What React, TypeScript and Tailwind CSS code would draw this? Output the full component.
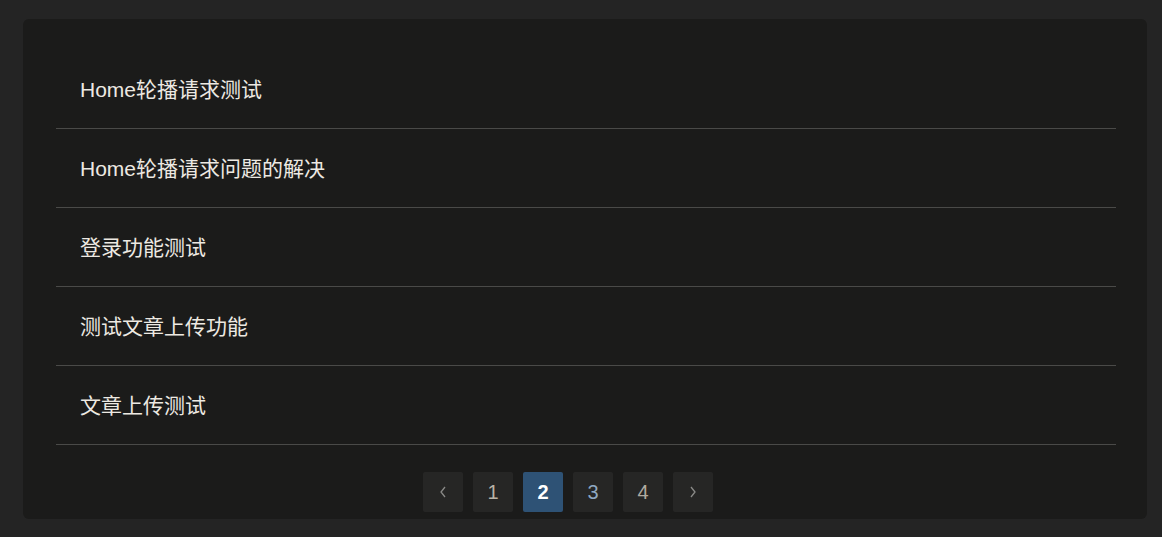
import React from "react";

const items = [
  "Home轮播请求测试",
  "Home轮播请求问题的解决",
  "登录功能测试",
  "测试文章上传功能",
  "文章上传测试",
];

export default function App() {
  const font = {
    fontFamily: '"Liberation Sans", Arial, "Noto Sans CJK SC", sans-serif',
  };
  return (
    <div className="min-h-[537px] w-full bg-[#242424] pt-[19px] pb-[19px]" style={font}>
      <div className="ml-[23px] w-[1124px] rounded-[6px] bg-[#1b1b1a] pl-[33px] pr-[31px] pt-[31px] pb-[6px]">
        <ul>
          {items.map((t) => (
            <li
              key={t}
              className="flex h-[79px] items-center border-b border-[#4a4a48] pl-[24px] pt-[2px] text-[21px] text-[#ede9e2]"
            >
              {t}
            </li>
          ))}
        </ul>
        <div className="mt-[27px] flex justify-center gap-[10px] pr-[36px]">
          <button className="flex h-[40px] w-[40px] items-center justify-center rounded-[2px] bg-[#262625] text-[#8a8a88]">
            <svg width="10" height="14" viewBox="0 0 10 14" fill="none" stroke="currentColor" strokeWidth="1.3">
              <path d="M7 2 L3 7 L7 12" />
            </svg>
          </button>
          <button className="flex h-[40px] w-[40px] items-center justify-center rounded-[2px] bg-[#262625] text-[20px] text-[#b8b2a6]">
            1
          </button>
          <button className="flex h-[40px] w-[40px] items-center justify-center rounded-[2px] bg-[#2e5275] text-[20px] font-bold text-white">
            2
          </button>
          <button className="flex h-[40px] w-[40px] items-center justify-center rounded-[2px] bg-[#262625] text-[20px] text-[#8fa8c2]">
            3
          </button>
          <button className="flex h-[40px] w-[40px] items-center justify-center rounded-[2px] bg-[#262625] text-[20px] text-[#b0aaa0]">
            4
          </button>
          <button className="flex h-[40px] w-[40px] items-center justify-center rounded-[2px] bg-[#262625] text-[#8a8a88]">
            <svg width="10" height="14" viewBox="0 0 10 14" fill="none" stroke="currentColor" strokeWidth="1.3">
              <path d="M3 2 L7 7 L3 12" />
            </svg>
          </button>
        </div>
        <div className="h-px" />
      </div>
    </div>
  );
}
